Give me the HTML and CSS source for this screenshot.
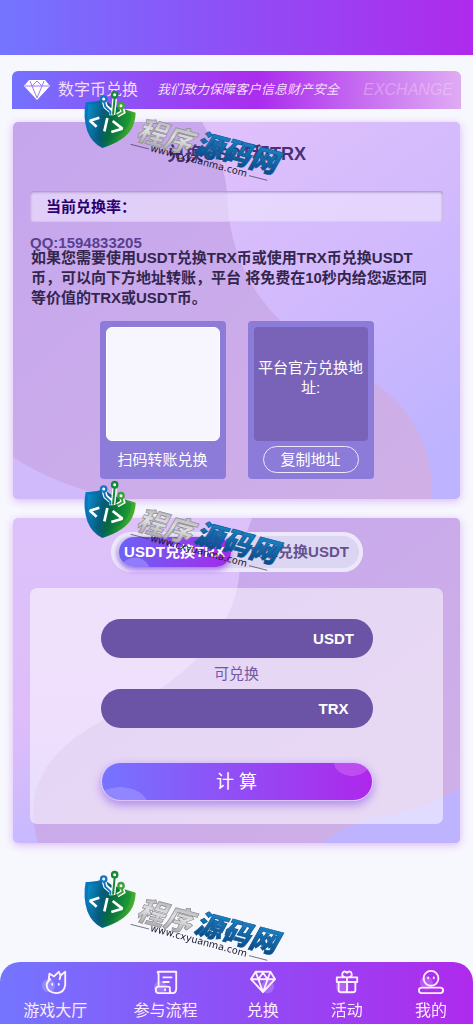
FILE: index.html
```html
<!DOCTYPE html>
<html lang="zh-CN">
<head>
<meta charset="utf-8">
<meta name="viewport" content="width=device-width, initial-scale=1">
<title>数字币兑换</title>
<link rel="stylesheet" href="styles.css">
</head>
<body>
<svg class="defs" width="0" height="0" aria-hidden="true">
  <defs>
    <linearGradient id="shield" x1="0" y1="0.3" x2="1" y2="0.5">
      <stop offset="0" stop-color="#0878c4"/><stop offset="0.45" stop-color="#075f78"/><stop offset="0.6" stop-color="#0b7a3c"/><stop offset="1" stop-color="#4fb52c"/>
    </linearGradient>
    <linearGradient id="shield-in" x1="0" y1="0" x2="1" y2="0.2">
      <stop offset="0" stop-color="#0a90d0"/><stop offset="0.4" stop-color="#065a7c"/><stop offset="0.6" stop-color="#076a40"/><stop offset="1" stop-color="#1c9a34"/>
    </linearGradient>
    <linearGradient id="silver" x1="0" y1="0" x2="0" y2="1">
      <stop offset="0" stop-color="#98989c"/><stop offset="0.5" stop-color="#e2e2e4"/><stop offset="1" stop-color="#96969a"/>
    </linearGradient>
    <linearGradient id="azure" x1="0" y1="0" x2="0" y2="1">
      <stop offset="0" stop-color="#1d93d6"/><stop offset="1" stop-color="#0a3f7c"/>
    </linearGradient>
    <linearGradient id="lilac" x1="0" y1="0" x2="1" y2="1">
      <stop offset="0" stop-color="#c5a6ee"/><stop offset="1" stop-color="#d0b0e6"/>
    </linearGradient>
    <linearGradient id="sky" gradientUnits="userSpaceOnUse" x1="200" y1="20" x2="430" y2="340">
      <stop offset="0" stop-color="#dfc0fb"/><stop offset="0.5" stop-color="#d0b9fd"/><stop offset="1" stop-color="#bdb3ff"/>
    </linearGradient>
    <linearGradient id="rose" x1="0" y1="0" x2="0" y2="1">
      <stop offset="0" stop-color="#dcc2fa"/><stop offset="0.6" stop-color="#debdf9"/><stop offset="1" stop-color="#c8b9ff"/>
    </linearGradient>
    <symbol id="stamp" viewBox="30 30 630 285">
      <path d="M47 66Q76 68 100 57L126 76 197 98Q196 124 186 144 166 182 97 204 66 190 52 154 38 110 47 66Z" fill="url(#shield)"/>
      <path d="M56 73Q80 76 103 66L126 84 183 100Q184 122 172 142 154 170 97 192 72 180 60 150 48 112 56 73Z" fill="url(#shield-in)"/>
      <g fill="none" stroke="#fff" stroke-width="14"><path d="M124 106V94L107 80 102 64M129 104L134 56M142 106L159 96 154 82"/></g>
      <g fill="none" stroke-width="6"><path d="M121 104V94L106 80 102 64" stroke="#1675c2"/><path d="M129 104L134 52" stroke="#148a36"/><path d="M142 106L158 96 154 82" stroke="#3da337"/></g>
      <g fill="#fff" stroke-width="7"><circle cx="101" cy="57" r="8" stroke="#1675c2"/><circle cx="134" cy="44" r="8" stroke="#148a36"/><circle cx="153" cy="77" r="8" stroke="#3da337"/></g>
      <path d="M88 113L60 122 80 140M112 114L103 154M128 123L157 146 124 156" fill="none" stroke="#fff" stroke-width="8" stroke-linejoin="bevel"/>
      <g class="stamp-name">
        <text transform="translate(196 176) rotate(15)" font-size="84" fill="url(#silver)" stroke="#8c8c90">程序</text>
        <text transform="translate(370 216) rotate(15)" font-size="84" fill="url(#azure)" stroke="#0b5796">源码网</text>
      </g>
      <text class="stamp-url" transform="translate(239 213) rotate(15)" font-size="29" fill="#17172a">www.cxyuanma.com</text>
      <path d="M182 193L237 207M537 287L592 301" stroke="#33334a" stroke-width="2"/>
    </symbol>
  </defs>
</svg>

<header class="topbar"></header>

<main class="page">
  <section class="banner">
    <svg class="banner-icon" viewBox="0 0 28 22" aria-hidden="true">
      <path d="M6 1H22L27 7 14 21 1 7Z" fill="#fff"/>
      <path d="M2 7H26M7 2L9 7 14 19 19 7 21 2M9 7L14 2 19 7" fill="none" stroke="#9a78f4"/>
    </svg>
    <h1 class="banner-title">数字币兑换</h1>
    <p class="banner-note">我们致力保障客户信息财产安全</p>
    <span class="banner-word">EXCHANGE</span>
  </section>

  <section class="card card-info">
    <svg class="card-art" viewBox="0 0 447 377" preserveAspectRatio="none" aria-hidden="true">
      <rect width="447" height="377" fill="url(#lilac)"/>
      <path d="M189 0Q212 40 214 71 216 150 269 200L360 260Q420 300 419 377H447V0Z" fill="url(#sky)"/>
      <path d="M0 335Q40 362 104 377H0Z" fill="#d1bafc"/>
    </svg>
    <h2 class="card-title">兑换USDT和TRX</h2>
    <p class="rate">当前兑换率：</p>
    <p class="contact">QQ:1594833205</p>
    <p class="intro">如果您需要使用USDT兑换TRX币或使用TRX币兑换USDT<br>币，可以向下方地址转账，平台 将免费在10秒内给您返还同<br>等价值的TRX或USDT币。</p>
    <div class="tiles">
      <div class="tile">
        <div class="tile-face tile-code"></div>
        <p class="tile-label">扫码转账兑换</p>
      </div>
      <div class="tile">
        <div class="tile-face tile-address">平台官方兑换地址:</div>
        <button class="copy" type="button">复制地址</button>
      </div>
    </div>
  </section>

  <section class="card card-calc">
    <svg class="card-art" viewBox="0 0 447 325" preserveAspectRatio="none" aria-hidden="true">
      <rect width="447" height="325" fill="url(#rose)"/>
      <path d="M239 0Q227 30 226 60 218 120 150 169L87 204Q2 250 25 325H447V0Z" fill="url(#lilac)"/>
      <path d="M310 325Q335 303 375 297 415 290 447 269V325Z" fill="#beb3ff"/>
    </svg>
    <div class="switch">
      <button class="switch-item is-active" type="button">USDT兑换TRX</button>
      <button class="switch-item" type="button">TRX兑换USDT</button>
    </div>
    <form class="calc">
      <div class="field">
        <input id="from" class="field-input" type="text">
        <label class="field-unit" for="from">USDT</label>
      </div>
      <p class="calc-hint">可兑换</p>
      <div class="field">
        <input id="to" class="field-input" type="text">
        <label class="field-unit" for="to">TRX</label>
      </div>
      <button class="submit" type="button">计 算</button>
    </form>
  </section>
</main>

<svg class="stamp stamp-a" aria-hidden="true"><use href="#stamp"/></svg>
<svg class="stamp stamp-b" aria-hidden="true"><use href="#stamp"/></svg>
<svg class="stamp stamp-c" aria-hidden="true"><use href="#stamp"/></svg>

<nav class="tabs">
  <a class="tab" href="#hall">
    <svg class="tab-icon" viewBox="0 0 28 28" aria-hidden="true"><circle class="glow" cx="7" cy="18" r="7"/><path d="M7 13L8 5 13 8 18 3 20 7 25 3V17Q24 26 15 26 5 25 5 17 5 14 9 11M20 7L19 11"/><path d="M11 16V17M18 16V17"/></svg>
    <span>游戏大厅</span>
  </a>
  <a class="tab" href="#guide">
    <svg class="tab-icon" viewBox="0 0 28 28" aria-hidden="true"><circle class="glow" cx="8" cy="20" r="7"/><path d="M6 19V5Q4 3 6 3H25V21Q25 26 21 26H6Q3 26 3 22 3 19 6 19H16Q19 19 18 22 18 26 21 26M11 9H20M11 14H17M13 22V23"/></svg>
    <span>参与流程</span>
  </a>
  <a class="tab" href="#exchange">
    <svg class="tab-icon" viewBox="0 0 28 28" aria-hidden="true"><circle class="glow" cx="19" cy="19" r="7"/><path d="M6 3H22L27 11 14 25 1 11ZM1 11H27M6 3L9 11 14 25 19 11 22 3M9 11L14 4 19 11"/></svg>
    <span>兑换</span>
  </a>
  <a class="tab" href="#events">
    <svg class="tab-icon" viewBox="0 0 28 28" aria-hidden="true"><circle class="glow" cx="9" cy="19" r="7"/><path d="M3 9H25V14H3ZM5 14V23Q5 25 7 25H21Q23 25 23 23V14M14 9V25M14 9Q8 9 9 5 10 1 14 4 18 1 19 5 20 9 14 9Z"/></svg>
    <span>活动</span>
  </a>
  <a class="tab" href="#me">
    <svg class="tab-icon" viewBox="0 0 28 28" aria-hidden="true"><circle class="glow" cx="9" cy="15" r="7"/><circle cx="14" cy="10" r="8"/><path d="M11 9V10M17 9V10"/><rect x="1" y="20" width="26" height="6" rx="3"/></svg>
    <span>我的</span>
  </a>
</nav>
</body>
</html>
```
FILE: styles.css
```css
* { box-sizing: border-box; }

body {
  margin: 0;
  min-height: 100vh;
  position: relative;
  background: #f7f7fe;
  color: #33264d;
  font-family: "Liberation Sans", "Noto Sans CJK SC", sans-serif;
  font-size: 15px;
  line-height: 20px;
}

h1, h2, p { margin: 0; }

button, input {
  font: inherit;
  border: 0;
  padding: 0;
}

.defs { position: absolute; }

.topbar {
  height: 55px;
  background: linear-gradient(90deg, #7475ff, #8f4ef6 50%, #af2aec);
}

.page { padding: 16px 12px 100px; }

.banner {
  display: flex;
  align-items: center;
  height: 38px;
  padding: 0 8px 0 11px;
  border-radius: 6px 6px 0 0;
  background: linear-gradient(90deg, #7472ff, #ab2cee 55%, #e0abf3);
  color: #f3dcff;
  white-space: nowrap;
}

.banner-icon { width: 28px; height: 22px; }

.banner-title {
  margin-left: 7px;
  font-size: 16px;
  font-weight: 400;
}

.banner-note {
  margin-left: 19px;
  font-size: 13px;
  font-style: italic;
}

.banner-word {
  margin-left: auto;
  font-size: 16px;
  font-style: italic;
  color: rgba(255, 225, 255, 0.35);
}

.card {
  position: relative;
  z-index: 0;
  margin: 0 1px;
  padding: 0 17px;
  border-radius: 5px;
  overflow: hidden;
  box-shadow: 0 2px 8px #d9b8f4;
}

.card-art {
  position: absolute;
  inset: 0;
  z-index: -1;
  width: 100%;
  height: 100%;
}

.card-info {
  margin-top: 13px;
  padding-top: 20px;
  padding-bottom: 20px;
}

.card-title {
  font-size: 18px;
  line-height: 24px;
  text-align: center;
  color: #4a3070;
}

.rate {
  margin-top: 25px;
  padding: 6px 16px 5px;
  border-radius: 3px;
  background: rgba(238, 228, 255, 0.65);
  box-shadow: inset 0 1px 3px #9b82bd;
  color: #2a0070;
  font-weight: 700;
}

.contact {
  margin-top: 16px;
  line-height: 10px;
  font-weight: 700;
  color: #594090;
}

.intro {
  padding-left: 1px;
  font-weight: 700;
  color: #33264d;
  line-height: 20px;
  white-space: nowrap;
}

.tiles {
  display: flex;
  justify-content: center;
  gap: 22px;
  margin-top: 13px;
}

.tile {
  display: flex;
  flex-direction: column;
  align-items: center;
  gap: 5px;
  width: 126px;
  padding: 6px;
  border-radius: 4px;
  background: #8c7bd9;
  color: #fff;
}

.tile-face {
  width: 100%;
  height: 114px;
  border-radius: 6px;
}

.tile-code {
  background: #f7f6ff;
  border: 1px solid #fff;
}

.tile-address {
  padding: 31px 3px 0;
  border-radius: 4px;
  background: #7963b9;
  text-align: center;
}

.tile-label { line-height: 27px; }

.copy {
  width: 96px;
  height: 27px;
  border: 1px solid #efe8ff;
  border-radius: 14px;
  background: none;
  color: #fff;
}

.card-calc {
  margin-top: 19px;
  padding-top: 14px;
  padding-bottom: 19px;
}

.switch {
  display: flex;
  width: 252px;
  height: 40px;
  margin: 0 auto;
  padding: 5px 8px;
  border-radius: 20px;
  background: #dcd6f2;
  box-shadow: inset 0 0 0 4px #ece7fa;
}

.switch-item {
  flex: 1;
  height: 30px;
  padding-left: 12px;
  border-radius: 15px;
  background: none;
  color: #67518f;
  font-weight: 700;
  white-space: nowrap;
}

.switch-item.is-active {
  flex: 0 0 112px;
  padding-left: 0;
  background:
    radial-gradient(circle at 16px 36px, rgba(155, 140, 255, 0.7) 15px, transparent 16px),
    linear-gradient(90deg, #6b62f5, #a42bea);
  box-shadow: 0 3px 6px #a570e6;
  color: #fff;
}

.calc {
  display: flex;
  flex-direction: column;
  align-items: center;
  margin-top: 16px;
  padding: 31px 16px 23px;
  border-radius: 7px;
  background: rgba(255, 255, 255, 0.52);
}

.field {
  display: flex;
  width: 272px;
  height: 39px;
  border-radius: 20px;
  background: #6b54a6;
}

.field-input {
  flex: 1;
  min-width: 0;
  padding-left: 20px;
  border-radius: 20px 0 0 20px;
  background: transparent;
  color: #fff;
  outline: 0;
}

.field-unit {
  flex: 0 0 78px;
  line-height: 39px;
  text-align: center;
  font-weight: 700;
  color: #fff;
}

.calc-hint {
  padding: 6px 0 5px;
  color: #7359a0;
}

.submit {
  width: 272px;
  height: 39px;
  margin-top: 34px;
  border: 1px solid #d8c4ff;
  border-radius: 20px;
  background:
    radial-gradient(ellipse 28px 18px at 18px 42px, rgba(150, 140, 255, 0.8) 97%, transparent),
    radial-gradient(ellipse 18px 13px at 250px 0, rgba(200, 90, 240, 0.7) 97%, transparent),
    linear-gradient(90deg, #7574ff, #ae27eb);
  box-shadow: 0 4px 10px #b18aec;
  color: #fff;
  font-size: 18px;
}

.stamp {
  position: absolute;
  left: 80px;
  z-index: 3;
  width: 210px;
  height: 95px;
  pointer-events: none;
}

.stamp-a { top: 90px; }
.stamp-b { top: 480px; }
.stamp-c { top: 870px; }

.stamp-name {
  font-family: "Noto Sans CJK SC", sans-serif;
  font-weight: 900;
  font-style: italic;
  stroke-width: 2px;
}

.stamp-url { font-family: "DejaVu Sans", sans-serif; }

.tabs {
  position: fixed;
  inset: auto 0 0;
  z-index: 2;
  display: grid;
  grid-template-columns: 21fr 21fr 16fr 16fr 16fr;
  height: 62px;
  padding-top: 7px;
  border-radius: 20px 20px 0 0;
  background: linear-gradient(90deg, #7475ff, #8f4ef6 50%, #af2aec);
}

.tab {
  display: flex;
  flex-direction: column;
  align-items: center;
  gap: 6px;
  color: #fbeaff;
  font-size: 16px;
  text-decoration: none;
}

.tab-icon {
  width: 26px;
  height: 26px;
  fill: none;
  stroke: #fff0ff;
  stroke-width: 2;
  stroke-linejoin: round;
  stroke-linecap: round;
}

.glow {
  fill: rgba(255, 255, 255, 0.2);
  stroke: none;
}
```
